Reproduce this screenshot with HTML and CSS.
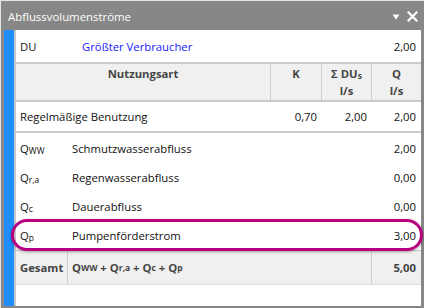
FILE: index.html
```html
<!DOCTYPE html>
<html>
<head>
    <title>Abflussvolumenströme</title>
    <link rel="stylesheet" href="styles.css">
</head>
<body>
    <div class="window">
        <div class="titlebar">
            <span class="title">Abflussvolumenströme</span>
            <span class="tools">
                <svg class="tool-arrow" width="8" height="6" viewBox="0 0 8 6"><path d="M0.5 0.5 H7.5 L4 5.5 Z" fill="#fff"/></svg>
                <svg class="tool-close" width="11" height="11" viewBox="0 0 11 11"><path d="M1.5 1.5 L9.5 9.5 M9.5 1.5 L1.5 9.5" stroke="#fff" stroke-width="2.2" stroke-linecap="square"/></svg>
            </span>
        </div>
        <div class="frame">
            <div class="strip"></div>
            <div class="panel">
                <div class="du-row">
                    <span>DU</span>
                    <span class="link">Größter Verbraucher</span>
                    <span class="num">2,00</span>
                </div>

                <div class="cols head">
                    <div>Nutzungsart</div>
                    <div>K</div>
                    <div><span>Σ DU<sub>s</sub></span><span>l/s</span></div>
                    <div><span>Q</span><span>l/s</span></div>
                </div>

                <div class="cols usage">
                    <div class="name">Regelmäßige Benutzung</div>
                    <div class="num">0,70</div>
                    <div class="num">2,00</div>
                    <div class="num last">2,00</div>
                </div>

                <div class="flows">
                    <div class="flow">
                        <span>Q<sub>WW</sub></span>
                        <span>Schmutzwasserabfluss</span>
                        <span class="num">2,00</span>
                    </div>
                    <div class="flow">
                        <span>Q<sub>r,a</sub></span>
                        <span>Regenwasserabfluss</span>
                        <span class="num">0,00</span>
                    </div>
                    <div class="flow">
                        <span>Q<sub>c</sub></span>
                        <span>Dauerabfluss</span>
                        <span class="num">0,00</span>
                    </div>
                    <div class="flow">
                        <span>Q<sub>p</sub></span>
                        <span>Pumpenförderstrom</span>
                        <span class="num">3,00</span>
                        <span class="mark"></span>
                    </div>
                </div>

                <div class="total">
                    <div class="total-label">Gesamt</div>
                    <div class="total-formula">Q<sub>WW</sub>&nbsp;+ Q<sub>r,a</sub>&nbsp;+ Q<sub>c</sub>&nbsp;+ Q<sub>p</sub></div>
                    <div class="total-value">5,00</div>
                </div>
            </div>
        </div>
    </div>
</body>
</html>
```

FILE: styles.css
```css
body {
    margin: 0;
    font-family: "Open Sans", "Noto Sans", sans-serif;
    font-size: 11.3px;
    color: #111;
}

.window {
    width: 424px;
    height: 308px;
    box-sizing: border-box;
    background-color: #878787;
    border-top: 1px solid #e4e4e4;
    border-left: 1px solid #e4e4e4;
    display: flex;
    flex-direction: column;
}

.titlebar {
    height: 29px;
    box-sizing: border-box;
    padding: 2px 6px 0 7px;
    display: flex;
    align-items: center;
    color: #fff;
    font-size: 11.4px;
}

.title {
    flex: 1;
}

.tools {
    display: flex;
    align-items: center;
    gap: 7px;
}

.frame {
    flex: 1;
    display: flex;
    padding: 0 3px 2px 3px;
}

.strip {
    width: 10px;
    background-color: #1f8fff;
}

.panel {
    flex: 1;
    background-color: #fff;
    border-left: 2px solid #c8c8c8;
}

.num {
    text-align: right;
}

.link {
    color: #1a1aff;
}

sub {
    font-size: 8.5px;
    vertical-align: -1px;
    line-height: 0;
}

.du-row {
    height: 32px;
    display: grid;
    grid-template-columns: 62px 1fr auto;
    align-items: center;
    padding: 0 5px 0 4px;
    border-bottom: 2px solid #cacaca;
}

.cols {
    display: grid;
    grid-template-columns: 254px 51px 50px 50px;
}

.head {
    height: 36px;
    background-color: #f0f0f0;
    border-bottom: 2px solid #cacaca;
    font-weight: bold;
    color: #464646;
    text-align: center;
    line-height: 17px;
}

.head > div {
    display: flex;
    flex-direction: column;
    padding-top: 1px;
}

.head > div + div {
    border-left: 1px solid #cdcdcd;
}

.usage {
    height: 29px;
    align-items: center;
    border-bottom: 2px solid #cacaca;
}

.usage .name {
    padding-left: 4px;
}

.usage .num {
    padding-right: 4px;
}

.usage .last {
    padding-right: 5px;
}

.flows {
    padding-top: 1px;
}

.flow {
    position: relative;
    height: 29px;
    display: grid;
    grid-template-columns: 52px 1fr auto;
    align-items: center;
    padding: 0 5px 0 4px;
}

.mark {
    position: absolute;
    left: -5px;
    right: -2px;
    top: -2px;
    bottom: -1px;
    border: 3px solid #b8007f;
    border-radius: 16px;
    box-shadow: 0 1px 3px rgba(0, 0, 0, 0.35);
}

.total {
    height: 33px;
    display: grid;
    grid-template-columns: 51px 304px 50px;
    background-color: #f0f0f0;
    border-top: 1px solid #cacaca;
    border-bottom: 1px solid #e0e0e0;
    font-weight: bold;
    color: #444;
}

.total > div {
    display: flex;
    align-items: center;
}

.total-label {
    padding-left: 4px;
}

.total-formula {
    padding-left: 4px;
    border-left: 1px solid #cdcdcd;
}

.total-value {
    justify-content: flex-end;
    padding-right: 5px;
    border-left: 1px solid #cdcdcd;
}
```
